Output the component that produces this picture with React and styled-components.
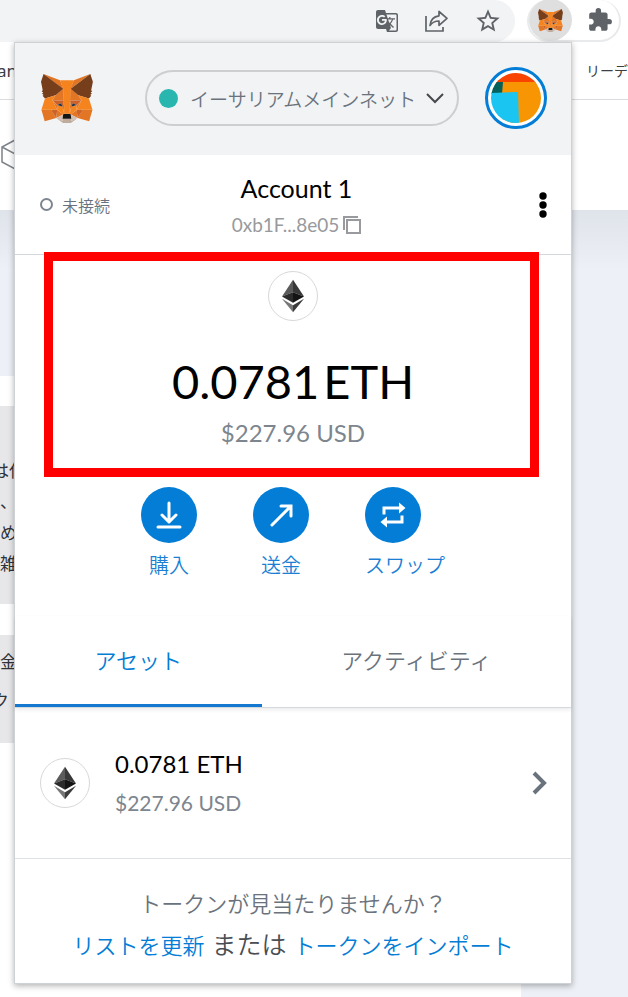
import React from "react";
import styled, { createGlobalStyle } from "styled-components";
import { MdGTranslate, MdStarBorder, MdExtension } from "react-icons/md";

const GlobalStyle = createGlobalStyle`
  * { box-sizing: border-box; }
  body {
    margin: 0;
    background: #fff;
    font-family: "Lato", "Noto Sans CJK JP", sans-serif;
    color: #000;
  }
  button {
    margin: 0;
    padding: 0;
    border: 0;
    background: none;
    font: inherit;
    color: inherit;
    cursor: pointer;
  }
  svg { display: block; flex: none; }
`;

const Screen = styled.div`
  display: grid;
  grid-template-columns: minmax(0, 1fr);
  min-height: 100vh;
  overflow: hidden;
`;

/* Browser window behind the popup */
const Browser = styled.div`
  grid-area: 1 / 1;
  display: flex;
  flex-direction: column;
  min-width: 0;
`;

const Toolbar = styled.header`
  display: flex;
  height: 43px;
  gap: 12px;
  padding-right: 7px;
`;

const AddressBar = styled.div`
  flex: 1;
  display: flex;
  align-items: center;
  justify-content: flex-end;
  gap: 25px;
  height: 42px;
  padding-right: 13px;
  border-radius: 0 21px 21px 0;
  background: #f1f3f4;
  color: #5f6368;
`;

const Extensions = styled.div`
  display: flex;
  align-items: center;
  gap: 15px;
  width: 94px;
  height: 42px;
  border: 2px solid #e8eaeb;
  border-top: 0;
  border-radius: 21px;
  color: #5f6368;
`;

const ExtensionButton = styled.button`
  display: grid;
  place-items: center;
  width: 43px;
  height: 42px;
  border-radius: 50%;
  background: #dfdfe0;
`;

const Bookmarks = styled.nav`
  display: flex;
  align-items: center;
  justify-content: space-between;
  height: 57px;
  border-bottom: 1px solid #dadce0;
  font: 17px/24px "Noto Sans", "Noto Sans CJK JP", sans-serif;
  color: #3c4043;
  white-space: nowrap;
`;

const BookmarkEnd = styled.span`
  margin-left: -3px;
`;

const ReadingList = styled.span`
  font-size: 14px;
`;

const SiteHeader = styled.div`
  display: flex;
  align-items: center;
  height: 110px;
`;

const SiteBody = styled.div`
  flex: 1;
  display: flex;
  background: linear-gradient(#dfe3ea, #edf0f6 60px);
`;

const Article = styled.main`
  flex: 1;
  display: flex;
  flex-direction: column;
  gap: 31px;
  margin: 166px 107px 0 0;
  padding-top: 30px;
  background: #fff;
`;

const Quote = styled.div`
  height: ${(p) => p.$height}px;
  padding-top: ${(p) => p.$top}px;
  background: #e7e7e9;
  font-family: "Noto Sans CJK JP", sans-serif;
  font-size: 17px;
  line-height: ${(p) => p.$line}px;
  color: #303238;
`;

const QuoteLine = styled.div`
  margin-left: ${(p) => (p.$outdent ? "-8px" : "0")};
`;

/* Wallet popup */
const Popup = styled.section`
  grid-area: 1 / 1;
  position: relative;
  align-self: start;
  margin: 42px 56px 14px 14px;
  border: 1px solid #cfd2d4;
  background: #fff;
  box-shadow: 0 2px 6px rgba(0, 0, 0, 0.3);
`;

const WalletHeader = styled.header`
  display: flex;
  align-items: center;
  justify-content: space-between;
  height: 112px;
  padding: 0 24px 2px 26px;
  background: #f2f3f4;
`;

const NetworkButton = styled.button`
  display: flex;
  align-items: center;
  height: 56px;
  margin-left: 26px;
  padding: 0 13px 0 12px;
  border: 2px solid #cccecf;
  border-radius: 28px;
  font-size: 19px;
  font-weight: 350;
  color: #6a737d;
  white-space: nowrap;
`;

const NetworkDot = styled.span`
  width: 19px;
  height: 19px;
  margin-right: 12px;
  border-radius: 50%;
  background: #29b6af;
`;

const NetworkLabel = styled.span`
  margin-right: 10px;
`;

const AvatarButton = styled.button`
  display: grid;
  place-items: center;
  width: 62px;
  height: 62px;
  border: 3px solid #037dd6;
  border-radius: 50%;
  background: #fff;
`;

const AccountBar = styled.div`
  display: grid;
  grid-template-columns: 1fr auto 1fr;
  align-items: center;
  height: 100px;
  padding: 0 18px 0 25px;
  border-bottom: 1px solid #d4d7db;
`;

const Status = styled.div`
  display: flex;
  align-items: center;
  gap: 9px;
  font-size: 16px;
  font-weight: 350;
  color: #6a737d;
`;

const StatusRing = styled.span`
  width: 13px;
  height: 13px;
  border: 2px solid #7d858e;
  border-radius: 50%;
`;

const AccountButton = styled.button`
  display: flex;
  flex-direction: column;
  align-items: center;
  gap: 6px;
  padding-top: 2px;
`;

const AccountName = styled.span`
  font-size: 25px;
  line-height: 32px;
`;

const Address = styled.span`
  display: flex;
  align-items: center;
  gap: 4px;
  font-size: 19px;
  line-height: 30px;
  color: #989a9d;
`;

const MenuButton = styled.button`
  justify-self: end;
  padding: 4px 6px;
`;

const Balance = styled.div`
  display: flex;
  flex-direction: column;
  align-items: center;
  padding-top: 16px;
`;

const TokenIcon = styled.span`
  display: grid;
  place-items: center;
  flex: none;
  width: 50px;
  height: 50px;
  border: 1px solid #d6d8da;
  border-radius: 50%;
  background: #fff;
`;

const Amount = styled.div`
  display: flex;
  gap: 4px;
  margin-top: 30px;
  font-size: 47px;
  line-height: 60px;
`;

const Fiat = styled.div`
  margin-top: 6px;
  font-size: 24px;
  line-height: 32px;
  color: #7d858e;
`;

const Highlight = styled.div`
  position: absolute;
  top: 209px;
  left: 29px;
  right: 32px;
  height: 225px;
  border: 9px solid #fe0000;
  pointer-events: none;
`;

const Actions = styled.div`
  display: flex;
  justify-content: center;
  gap: 56px;
  margin-top: 38px;
`;

const ActionButton = styled.button`
  min-width: 56px;
  font-size: 20px;
  line-height: 30px;
  color: #1c7fd4;
  font-weight: 350;
`;

const ActionCircle = styled.span`
  display: grid;
  place-items: center;
  width: 56px;
  height: 56px;
  margin-bottom: 7px;
  border-radius: 50%;
  background: #037dd6;
`;

const Tabs = styled.div`
  display: flex;
  height: 92px;
  margin-top: 36px;
  border-bottom: 1px solid #d6d9dc;
  box-shadow: 0 2px 4px rgba(0, 0, 0, 0.08);
`;

const Tab = styled.button`
  flex: 1 1 auto;
  padding-top: 2px;
  font-size: 22px;
  font-weight: 350;
  line-height: 32px;
  color: ${(p) => (p.$active ? "#037dd6" : "#6a737d")};
  border-bottom: 3px solid ${(p) => (p.$active ? "#1478d0" : "transparent")};
`;

const AssetRow = styled.button`
  display: flex;
  align-items: center;
  gap: 25px;
  width: 100%;
  height: 151px;
  padding: 0 23px 0 25px;
  border-bottom: 1px solid #e0e3e5;
  text-align: left;
`;

const AssetText = styled.span`
  flex: 1;
  display: flex;
  flex-direction: column;
  gap: 7px;
`;

const AssetAmount = styled.span`
  font-size: 24px;
  line-height: 32px;
`;

const AssetFiat = styled.span`
  font-size: 21px;
  line-height: 32px;
  color: #7d858e;
`;

const Footer = styled.footer`
  padding: 25px 0 17px;
  text-align: center;
  font-size: 22px;
  font-weight: 350;
  line-height: 40px;
  color: #6a737d;
`;

const FooterLine = styled.p`
  margin: 0;
`;

const Or = styled.span`
  margin: 0 7px;
  font-size: 25px;
  color: #4a4d52;
`;

const Link = styled.a`
  color: #037dd6;
  text-decoration: none;
`;

function Fox({ width, height }) {
  return (
    <svg width={width} height={height} viewBox="1 1 33.7 31.1" preserveAspectRatio="none" aria-hidden="true">
      <path fill="#e17726" d="m32.9582 1-13.1341 9.7183 2.4424-5.7273z" />
      <path fill="#e27625" d="m2.663 1 13.0171 9.809-2.3254-5.818zM28.2295 23.5335l-3.4947 5.3386 7.4829 2.0603 2.1436-7.2823zM1.2728 23.6501l2.1306 7.2823 7.4699-2.0603-3.4817-5.3386zM10.4706 14.5149l-2.0786 3.1358 7.405.3369-.2469-7.969zM25.1505 14.5149l-5.1575-4.587-.1688 8.0597 7.4049-.3369zM10.8733 28.8721l4.4819-2.1639-3.8583-3.0062zM20.2659 26.7082l4.4689 2.1639-.6105-5.1701z" />
      <path fill="#d5bfb2" d="m24.7348 28.8721-4.469-2.1639.3638 2.9025-.039 1.231zM10.8732 28.8721l4.1572 1.9696-.026-1.231.3508-2.9025z" />
      <path fill="#cc6228" d="m10.8733 28.8721.6495-5.3386-4.1312.1167zM24.0982 23.5335l.6366 5.3386 3.4946-5.2219zM27.2291 17.6507l-7.405.3369.6885 3.7966 1.0913-2.2935 2.6372 1.2051zM11.3929 20.6958l2.6242-1.2051 1.0913 2.2935.6885-3.7966-7.4049-.3369z" />
      <path fill="#e27525" d="m8.392 17.6507 3.1049 6.0513-.1039-3.0062zM24.2412 20.6958l-.1169 3.0062 3.1049-6.0513zM15.797 17.9876l-.6886 3.7967.8704 4.4833.1949-5.9087zM19.8242 17.9876l-.3638 2.3584.1819 5.9216.8704-4.4833z" />
      <path fill="#f5841f" d="m20.5127 21.7842-.8704 4.4834.6236.4406 3.8584-3.0062.1169-3.0062zM11.3929 20.6958l.104 3.0062 3.8583 3.0062.6236-.4406-.8704-4.4834z" />
      <path fill="#233447" d="m15.1084 21.7842-3.7155-1.0884 2.6243-1.2051zM20.5126 21.7842l1.0913-2.2935 2.6372 1.2051z" />
      <path fill="#c0ac9d" d="m20.5906 30.8417.039-1.231-.3378-.2851h-4.9626l-.3248.2851.026 1.231-4.1572-1.9696 1.4551 1.1921 2.9489 2.0344h5.0536l2.962-2.0344 1.442-1.1921z" />
      <path fill="#161616" d="m20.2659 26.7082-.6236-.4406h-3.6635l-.6236.4406-.3508 2.9025.3248-.2851h4.9626l.3378.2851z" />
      <path fill="#763e1a" d="m33.5168 11.3532 1.1043-5.3645-1.6629-4.9887-12.6923 9.3944 4.8846 4.1205 6.8983 2.0085 1.52-1.7752-.6626-.4795 1.0523-.9588-.8054-.622 1.0523-.8034zM1 5.9887l1.1173 5.3645-.7145.5313 1.0652.8034-.8054.622 1.0522.9588-.6625.4795 1.52 1.7752 6.8983-2.0085 4.8846-4.1205-12.6923-9.3944z" />
      <path fill="#f5841f" d="m32.0489 16.5234-6.8983-2.0085 2.0786 3.1358-3.1049 6.0513 4.1052-.0519h6.1318zM10.4705 14.5149l-6.8983 2.0085-2.2994 7.1267h6.1188l4.1051.0519-3.1049-6.0513zM19.8241 17.9876l.4417-7.5932 2.0007-5.4034h-8.9119l2.0006 5.4034.4417 7.5932.1689 2.3842.013 5.8958h3.6635l.013-5.8958z" />
    </svg>
  );
}

function EthIcon() {
  return (
    <TokenIcon>
      <svg width="22" height="34" viewBox="0 0 23 34" aria-hidden="true">
        <path fill="#5b5b5b" d="M11.5 0 0 17.5 11.5 13z" />
        <path fill="#383838" d="M11.5 0 23 17.5 11.5 13z" />
        <path fill="#2b2b2b" d="M0 17.5 11.5 13v11z" />
        <path fill="#141414" d="M23 17.5 11.5 13v11z" />
        <path fill="#777" d="M0 20l11.500 6.700V34z" />
        <path fill="#3c3c3b" d="M23 20l-11.500 6.700V34z" />
      </svg>
    </TokenIcon>
  );
}

function ShareIcon() {
  return (
    <svg width="25" height="24" viewBox="0 0 25 24" fill="none" stroke="currentColor" strokeWidth="1.700" aria-hidden="true">
      <path d="M2 7v15h17v-4" />
      <path d="M15 2.500v4.300C9 7.500 6.500 11 6 16.500c2.500-3.500 5-4.500 9-4.500v4.300l8-7z" strokeLinejoin="round" />
    </svg>
  );
}

export default function App() {
  return (
    <Screen>
      <GlobalStyle />
      <Browser>
        <Toolbar>
          <AddressBar>
            <button aria-label="Translate"><MdGTranslate size={24} /></button>
            <button aria-label="Share"><ShareIcon /></button>
            <button aria-label="Bookmark"><MdStarBorder size={28} /></button>
          </AddressBar>
          <Extensions>
            <ExtensionButton aria-label="Wallet"><Fox width={25} height={23} /></ExtensionButton>
            <button aria-label="Extensions"><MdExtension size={26} /></button>
          </Extensions>
        </Toolbar>
        <Bookmarks>
          <BookmarkEnd>an</BookmarkEnd>
          <ReadingList>リーデ</ReadingList>
        </Bookmarks>
        <SiteHeader>
          <svg width="30" height="32" viewBox="0 0 30 32" fill="none" stroke="#7d8289" strokeWidth="1.500" aria-hidden="true">
            <path d="M15 1 2 8v15l13 7 13-7V8zM2 8l13 7 13-7M15 15v15" />
          </svg>
        </SiteHeader>
        <SiteBody>
          <Article>
            <Quote $height={198} $top={48} $line={31}>
              <QuoteLine $outdent>は仕</QuoteLine>
              <QuoteLine>、</QuoteLine>
              <QuoteLine>め</QuoteLine>
              <QuoteLine>雑</QuoteLine>
            </Quote>
            <Quote $height={108} $top={6} $line={39}>
              <QuoteLine>金</QuoteLine>
              <QuoteLine $outdent>クト</QuoteLine>
            </Quote>
          </Article>
        </SiteBody>
      </Browser>

      <Popup>
        <WalletHeader>
          <Fox width={52} height={49} />
          <NetworkButton>
            <NetworkDot />
            <NetworkLabel>イーサリアムメインネット</NetworkLabel>
            <svg width="18" height="11" viewBox="0 0 18 11" fill="none" stroke="#45484c" strokeWidth="2" aria-hidden="true">
              <path d="m1 1 8 8 8-8" />
            </svg>
          </NetworkButton>
          <AvatarButton aria-label="Account menu">
            <svg width="50" height="50" viewBox="0 0 50 50" aria-hidden="true">
              <clipPath id="avatar"><circle cx="25" cy="25" r="25" /></clipPath>
              <g clipPath="url(#avatar)">
                <path fill="#f94301" d="M0 0h50v10H0z" />
                <path fill="#f79602" d="M11 9h39v41H11z" />
                <path fill="#03605a" d="M0 9h12l-1 12H0z" />
                <path fill="#1bc5f2" d="M0 20l27-1 1 31H0z" />
              </g>
            </svg>
          </AvatarButton>
        </WalletHeader>

        <AccountBar>
          <Status><StatusRing />未接続</Status>
          <AccountButton>
            <AccountName>Account 1</AccountName>
            <Address>
              0xb1F...8e05
              <svg width="18" height="18" viewBox="0 0 18 18" fill="none" stroke="#989a9d" strokeWidth="2" aria-hidden="true">
                <path d="M1 14V1h14M4 4h13v13H4z" />
              </svg>
            </Address>
          </AccountButton>
          <MenuButton aria-label="Account options">
            <svg width="8" height="26" viewBox="0 0 8 26" aria-hidden="true">
              <circle cx="4" cy="4" r="3.700" />
              <circle cx="4" cy="13" r="3.700" />
              <circle cx="4" cy="22" r="3.700" />
            </svg>
          </MenuButton>
        </AccountBar>

        <Balance>
          <EthIcon />
          <Amount><span>0.0781</span><span>ETH</span></Amount>
          <Fiat>$227.96 USD</Fiat>
        </Balance>
        <Highlight />

        <Actions>
          <ActionButton>
            <ActionCircle>
              <svg width="26" height="28" viewBox="0 0 26 28" fill="none" stroke="#fff" strokeWidth="3" strokeLinecap="round" strokeLinejoin="round" aria-hidden="true">
                <path d="M13 2v19M6 14l7 7 7-7M2 26h22" />
              </svg>
            </ActionCircle>
            購入
          </ActionButton>
          <ActionButton>
            <ActionCircle>
              <svg width="24" height="24" viewBox="0 0 24 24" fill="none" stroke="#fff" strokeWidth="3" strokeLinecap="round" aria-hidden="true">
                <path d="M3 22 22 3M12 3h10v10" />
              </svg>
            </ActionCircle>
            送金
          </ActionButton>
          <ActionButton>
            <ActionCircle>
              <svg width="26" height="26" viewBox="0 0 26 26" fill="none" stroke="#fff" strokeWidth="3" aria-hidden="true">
                <path d="M4 12.500V6h16M22 13.500V20H6" />
                <path d="M19 .5 25.500 6 19 11.500zM7 14.500.5 20 7 25.500z" fill="#fff" stroke="none" />
              </svg>
            </ActionCircle>
            スワップ
          </ActionButton>
        </Actions>

        <Tabs role="tablist">
          <Tab role="tab" aria-selected="true" $active>アセット</Tab>
          <Tab role="tab" aria-selected="false">アクティビティ</Tab>
        </Tabs>

        <AssetRow>
          <EthIcon />
          <AssetText>
            <AssetAmount>0.0781 ETH</AssetAmount>
            <AssetFiat>$227.96 USD</AssetFiat>
          </AssetText>
          <svg width="16" height="24" viewBox="0 0 16 24" fill="none" stroke="#6a737d" strokeWidth="4" aria-hidden="true">
            <path d="m2 2 10 10L2 22" />
          </svg>
        </AssetRow>

        <Footer>
          <FooterLine>トークンが見当たりませんか？</FooterLine>
          <FooterLine>
            <Link href="#refresh">リストを更新</Link>
            <Or>または</Or>
            <Link href="#import">トークンをインポート</Link>
          </FooterLine>
        </Footer>
      </Popup>
    </Screen>
  );
}
